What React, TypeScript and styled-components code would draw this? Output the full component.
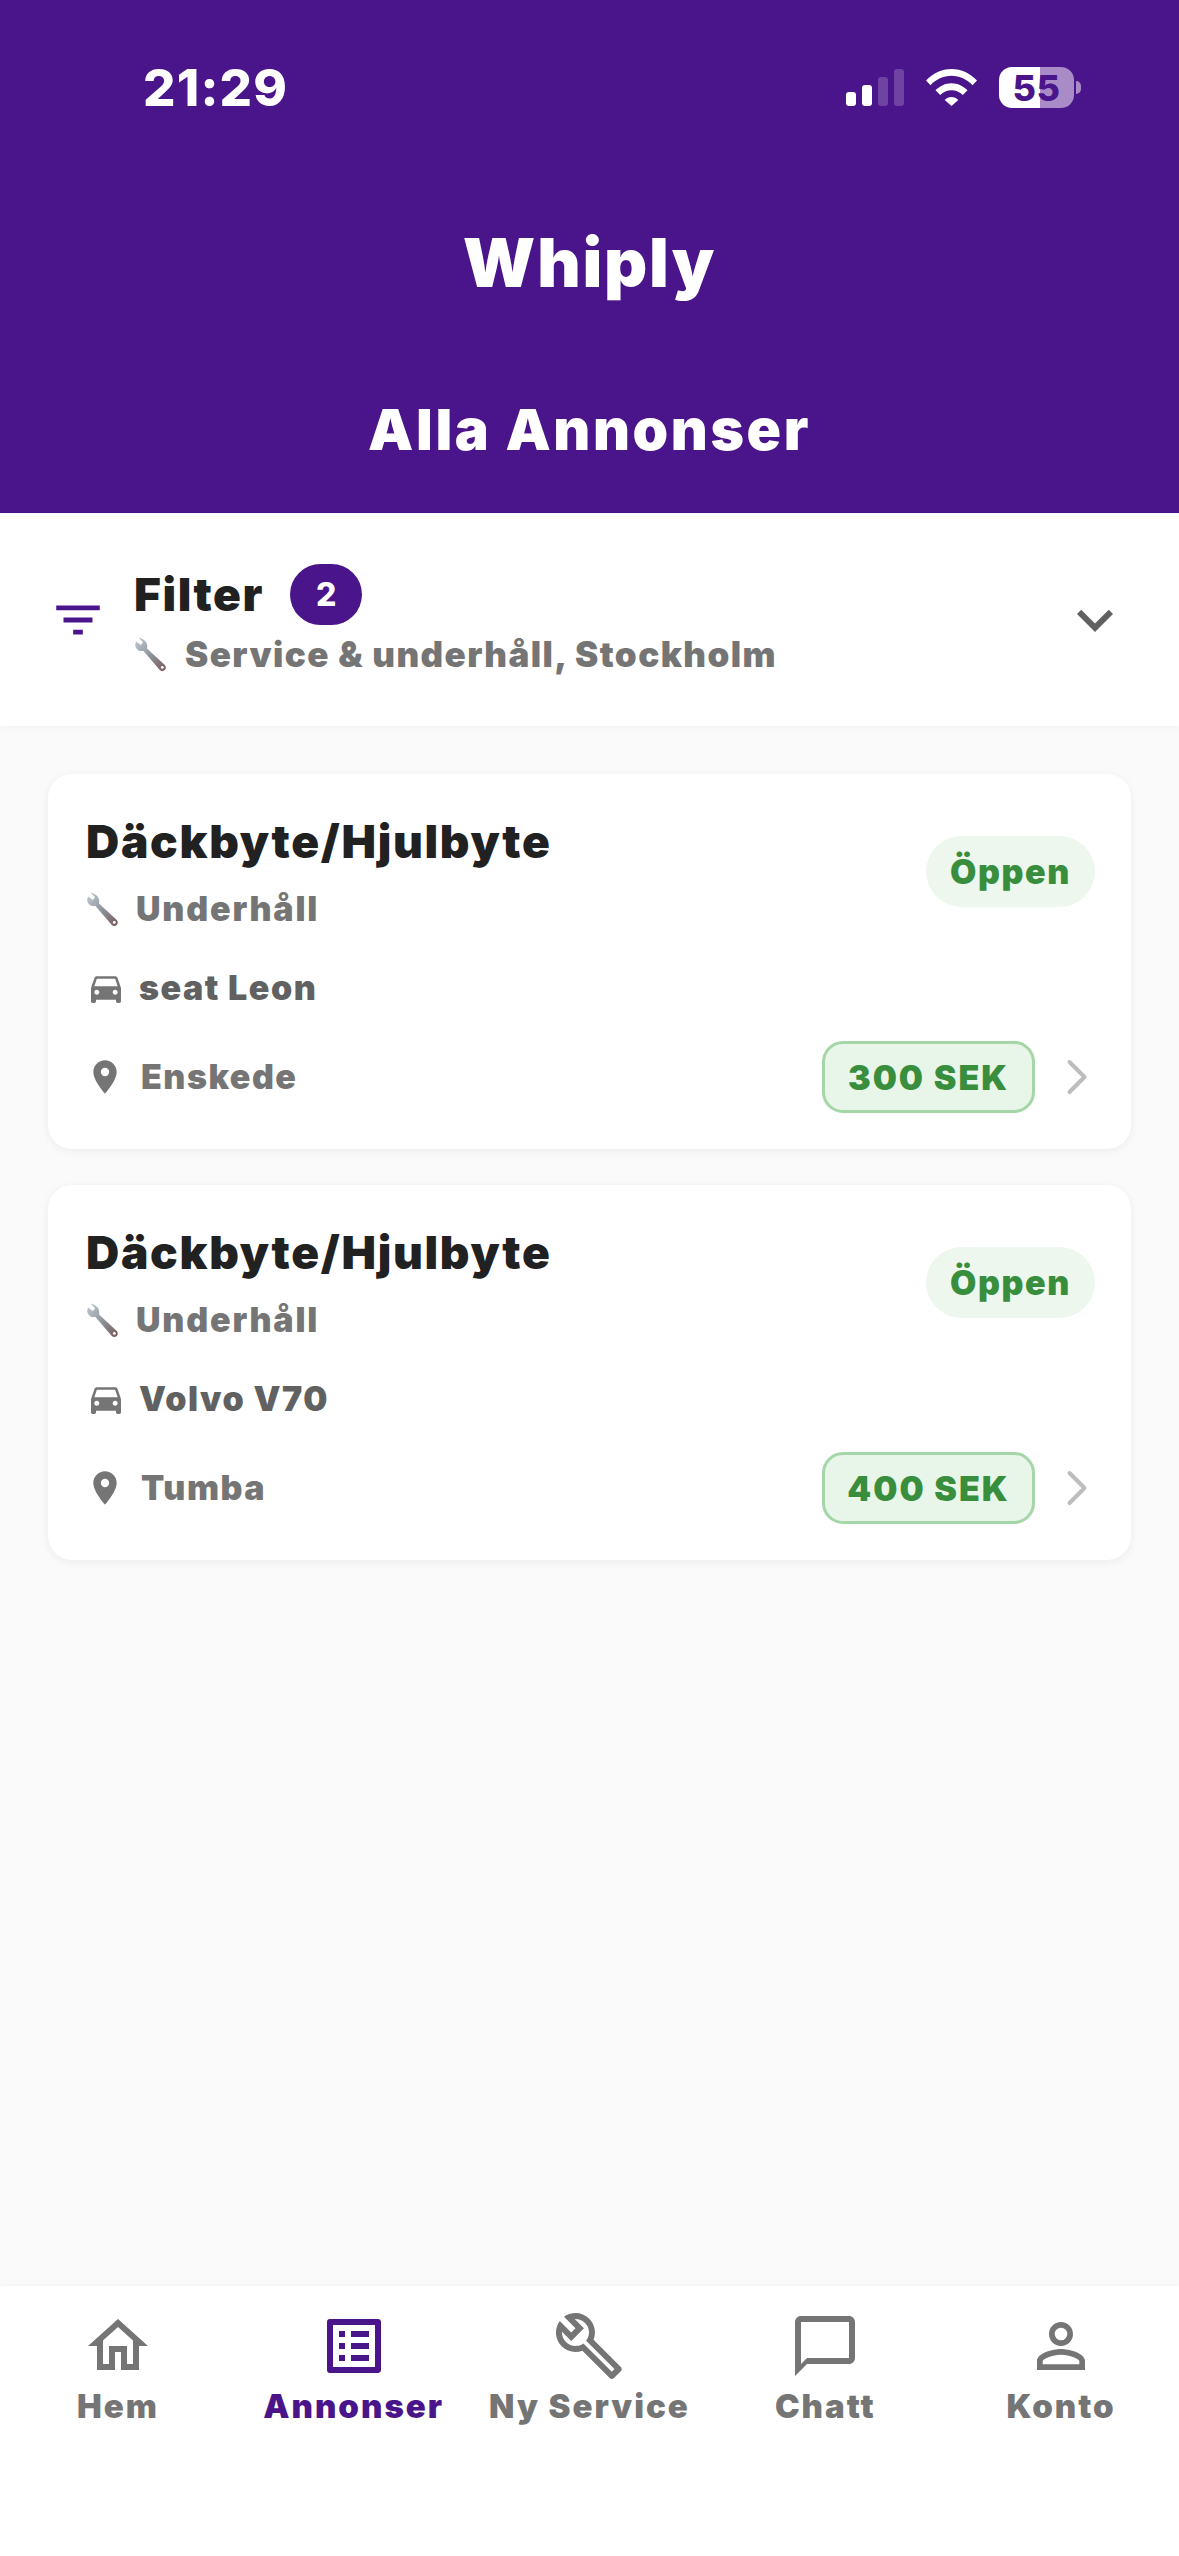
import styled, { createGlobalStyle } from "styled-components"
import {
  MdChatBubbleOutline,
  MdDirectionsCar,
  MdExpandMore,
  MdFilterList,
  MdOutlineBuild,
  MdOutlineHome,
  MdOutlineListAlt,
  MdPersonOutline,
  MdPlace,
} from "react-icons/md"
import { ChevronRight } from "lucide-react"

const purple = "#4a148a"
const font = `Inter, "Noto Sans", sans-serif`

const GlobalStyle = createGlobalStyle`
html, body {
  margin: 0;
  padding: 0;
  background: #fafafa;
}
* { box-sizing: border-box; }
`

const Page = styled.div`
background: #fafafa;
display: flex;
flex-direction: column;
font-family: ${font};
height: 2556px;
overflow: hidden;
width: 1179px;
`

const Header = styled.header`
background: ${purple};
color: #fff;
display: flex;
flex-direction: column;
height: 513px;
`

const StatusBar = styled.div`
align-items: center;
display: flex;
justify-content: space-between;
height: 41px;
margin-top: 67px;
padding: 0 105px 0 143px;
`

const Time = styled.span`
font-size: 51px;
font-weight: 800;
letter-spacing: 1.2px;
line-height: 1;
`

const StatusIcons = styled.div`
align-items: center;
display: flex;
gap: 22px;
`

const Battery = styled.div`
align-items: center;
background: linear-gradient(90deg, #fff 0 55%, #a98bc8 55% 100%);
border-radius: 13px;
color: ${purple};
display: flex;
font-size: 36px;
font-weight: 800;
height: 41px;
justify-content: center;
letter-spacing: 0.5px;
line-height: 1;
position: relative;
width: 75px;

&::before {
  background:
    radial-gradient(circle at 25px 25px, #fff 0 3px, transparent 3.5px),
    radial-gradient(circle at 48px 25px, #a98bc8 0 3px, transparent 3.5px);
  content: "";
  inset: 0;
  position: absolute;
}

&::after {
  background: #a98bc8;
  border-radius: 0 5px 5px 0;
  content: "";
  height: 13px;
  position: absolute;
  right: -7px;
  top: 14px;
  width: 5px;
}
`

const AppName = styled.h1`
font-size: 67px;
font-weight: 900;
letter-spacing: 1.8px;
line-height: 80px;
margin: 115px 0 0;
text-align: center;
`

const PageTitle = styled.h2`
font-size: 57px;
font-weight: 900;
letter-spacing: 2.6px;
line-height: 68px;
margin: 93px 0 0;
text-align: center;
`

const FilterBar = styled.div`
align-items: center;
background: #fff;
box-shadow: 0 2px 6px rgba(0, 0, 0, 0.035);
display: flex;
height: 213px;
padding: 0 48px 0 49px;
position: relative;
`

const FilterIcon = styled(MdFilterList)`
color: ${purple};
flex: none;
margin-right: 27px;
`

const FilterText = styled.div`
display: flex;
flex: 1;
flex-direction: column;
padding-top: 3px;
`

const FilterTitleRow = styled.div`
align-items: center;
display: flex;
gap: 26px;
margin-top: -3px;
`

const FilterTitle = styled.span`
color: #212121;
font-size: 46px;
font-weight: 900;
letter-spacing: 1.6px;
line-height: 61px;
`

const CountBadge = styled.span`
align-items: center;
background: ${purple};
border-radius: 31px;
color: #fff;
display: flex;
font-size: 32px;
font-weight: 800;
height: 61px;
justify-content: center;
width: 72px;
`

const FilterSummary = styled.div`
align-items: center;
color: #757575;
display: flex;
font-size: 35px;
font-weight: 900;
gap: 17px;
letter-spacing: 1.4px;
line-height: 44px;
margin: 7px 0 0 -2px;
`

const Expand = styled(MdExpandMore)`
color: #616161;
flex: none;
`

const List = styled.main`
display: flex;
flex: 1;
flex-direction: column;
gap: 36px;
padding: 48px 48px 0;
`

const Card = styled.article`
background: #fff;
border-radius: 24px;
box-shadow: 0 2px 8px rgba(0, 0, 0, 0.06);
height: 375px;
padding: 39px 36px 37px 38px;
`

const CardTop = styled.div`
align-items: center;
display: flex;
justify-content: space-between;
`

const CardTitle = styled.h3`
color: #212121;
font-size: 46px;
font-weight: 900;
letter-spacing: 1.7px;
line-height: 56px;
margin: 0 0 18px;
`

const Meta = styled.div<{ $dark?: boolean }>`
align-items: center;
color: ${props => (props.$dark ? "#616161" : "#757575")};
display: flex;
font-size: 34px;
font-weight: 900;
gap: 16px;
letter-spacing: 1.5px;
line-height: 44px;
`

const WrenchMeta = styled(Meta)`
gap: 16px;
letter-spacing: 1.8px;
margin-left: -2px;
`

const CarIcon = styled(MdDirectionsCar)`
color: #757575;
flex: none;
margin-right: -3px;
`

const PinIcon = styled(MdPlace)`
color: #757575;
flex: none;
margin-left: -1px;
`

const VehicleRow = styled.div`
margin-top: 35px;
`

const CardBottom = styled.div`
align-items: center;
display: flex;
justify-content: space-between;
margin-top: 31px;
`

const PriceWrap = styled.div`
align-items: center;
display: flex;
margin-right: -12px;
`

const StatusPill = styled.span`
align-items: center;
background: #edf7ee;
border-radius: 36px;
color: #388e3c;
display: flex;
font-size: 34px;
font-weight: 900;
height: 71px;
justify-content: center;
letter-spacing: 1.6px;
margin-top: -2px;
width: 169px;
`

const Price = styled.span`
align-items: center;
background: #e8f5e9;
border: 3px solid #a5d6a7;
border-radius: 21px;
color: #388e3c;
display: flex;
font-size: 34px;
font-weight: 900;
height: 72px;
justify-content: center;
letter-spacing: 2px;
width: 213px;
`

const Chevron = styled(ChevronRight)`
color: #bdbdbd;
margin-left: 12px;
`

const BottomNav = styled.nav`
background: #fff;
box-shadow: 0 -1px 4px rgba(0, 0, 0, 0.03);
display: grid;
grid-template-columns: repeat(5, 1fr);
height: 270px;
padding-top: 24px;
`

const NavItem = styled.div<{ $active?: boolean }>`
align-items: center;
color: ${props => (props.$active ? purple : "#757575")};
display: flex;
flex-direction: column;
font-size: 33px;
font-weight: 900;
letter-spacing: 2px;
line-height: 40px;

svg {
  margin-bottom: 4px;
}
`

const Wrench = () => (
  <svg width="36" height="36" viewBox="0 0 36 36" style={{ flex: "none" }}>
    <defs>
      <linearGradient id="wrenchSteel" x1="0" y1="0" x2="1" y2="1">
        <stop offset="0" stopColor="#c3cbd3" />
        <stop offset="0.55" stopColor="#8b9097" />
        <stop offset="1" stopColor="#77585a" />
      </linearGradient>
    </defs>
    <path
      fill="url(#wrenchSteel)"
      d="M6.500 1.500 11 6.200 8.800 9 4.200 5.400C2.600 7.800 3 11.200 5 13.200c1.800 1.800 4.200 2.200 6.200 1.500L27.800 34c1.200 1.200 3.600 1.300 5 0 1.400-1.400 1.300-3.600 0-5L15 12.600c.7-2.800.1-5.500-1.900-7.600-1.800-1.900-4.200-3.200-6.600-3.500Z"
    />
    <circle cx="30.300" cy="31.400" r="1.400" fill="#fff" />
  </svg>
)

const SignalIcon = () => (
  <svg width="58" height="37" viewBox="0 0 58 37" fill="#fff">
    <rect x="0" y="23" width="10" height="14" rx="3" />
    <rect x="16" y="16" width="10" height="21" rx="3" />
    <rect x="32" y="8" width="10" height="29" rx="3" opacity="0.2" />
    <rect x="48" y="0" width="10" height="37" rx="3" opacity="0.2" />
  </svg>
)

const WifiIcon = () => (
  <svg width="51" height="37" viewBox="0 0 51 37" fill="#fff">
    <path d="M0 11.500C6.800 4.400 15.600 0 25.500 0S44.200 4.400 51 11.500l-4.500 4.700C41 10.500 33.700 6.800 25.500 6.800S10 10.500 4.500 16.200Z" />
    <path d="M9.500 21.300C13.700 17 19.300 14.200 25.500 14.200s11.800 2.800 16 7.100l-4.700 4.800c-3-3-6.900-4.900-11.300-4.900s-8.300 1.900-11.300 4.900Z" />
    <path d="M18.700 30.900c1.800-1.800 4.200-2.900 6.800-2.900s5 1.100 6.800 2.900l-6.800 6.100Z" />
  </svg>
)

const Listing = ({ vehicle, place, price }: { vehicle: string; place: string; price: string }) => (
  <Card>
    <CardTop>
      <div>
        <CardTitle>Däckbyte/Hjulbyte</CardTitle>
        <WrenchMeta><Wrench />Underhåll</WrenchMeta>
      </div>
      <StatusPill>Öppen</StatusPill>
    </CardTop>
    <VehicleRow>
      <Meta $dark><CarIcon size={40} />{vehicle}</Meta>
    </VehicleRow>
    <CardBottom>
      <Meta><PinIcon size={40} />{place}</Meta>
      <PriceWrap>
        <Price>{price}</Price>
        <Chevron size={60} strokeWidth={1.6} />
      </PriceWrap>
    </CardBottom>
  </Card>
)

export default function App() {
  return (
    <Page>
      <GlobalStyle />
      <Header>
        <StatusBar>
          <Time>21:29</Time>
          <StatusIcons>
            <SignalIcon />
            <WifiIcon />
            <Battery>55</Battery>
          </StatusIcons>
        </StatusBar>
        <AppName>Whiply</AppName>
        <PageTitle>Alla Annonser</PageTitle>
      </Header>
      <FilterBar>
        <FilterIcon size={58} />
        <FilterText>
          <FilterTitleRow>
            <FilterTitle>Filter</FilterTitle>
            <CountBadge>2</CountBadge>
          </FilterTitleRow>
          <FilterSummary><Wrench />Service &amp; underhåll, Stockholm</FilterSummary>
        </FilterText>
        <Expand size={72} />
      </FilterBar>
      <List>
        <Listing vehicle="seat Leon" place="Enskede" price="300 SEK" />
        <Listing vehicle="Volvo V70" place="Tumba" price="400 SEK" />
      </List>
      <BottomNav>
        <NavItem><MdOutlineHome size={72} />Hem</NavItem>
        <NavItem $active><MdOutlineListAlt size={72} />Annonser</NavItem>
        <NavItem><MdOutlineBuild size={72} />Ny Service</NavItem>
        <NavItem><MdChatBubbleOutline size={72} />Chatt</NavItem>
        <NavItem><MdPersonOutline size={72} />Konto</NavItem>
      </BottomNav>
    </Page>
  )
}
